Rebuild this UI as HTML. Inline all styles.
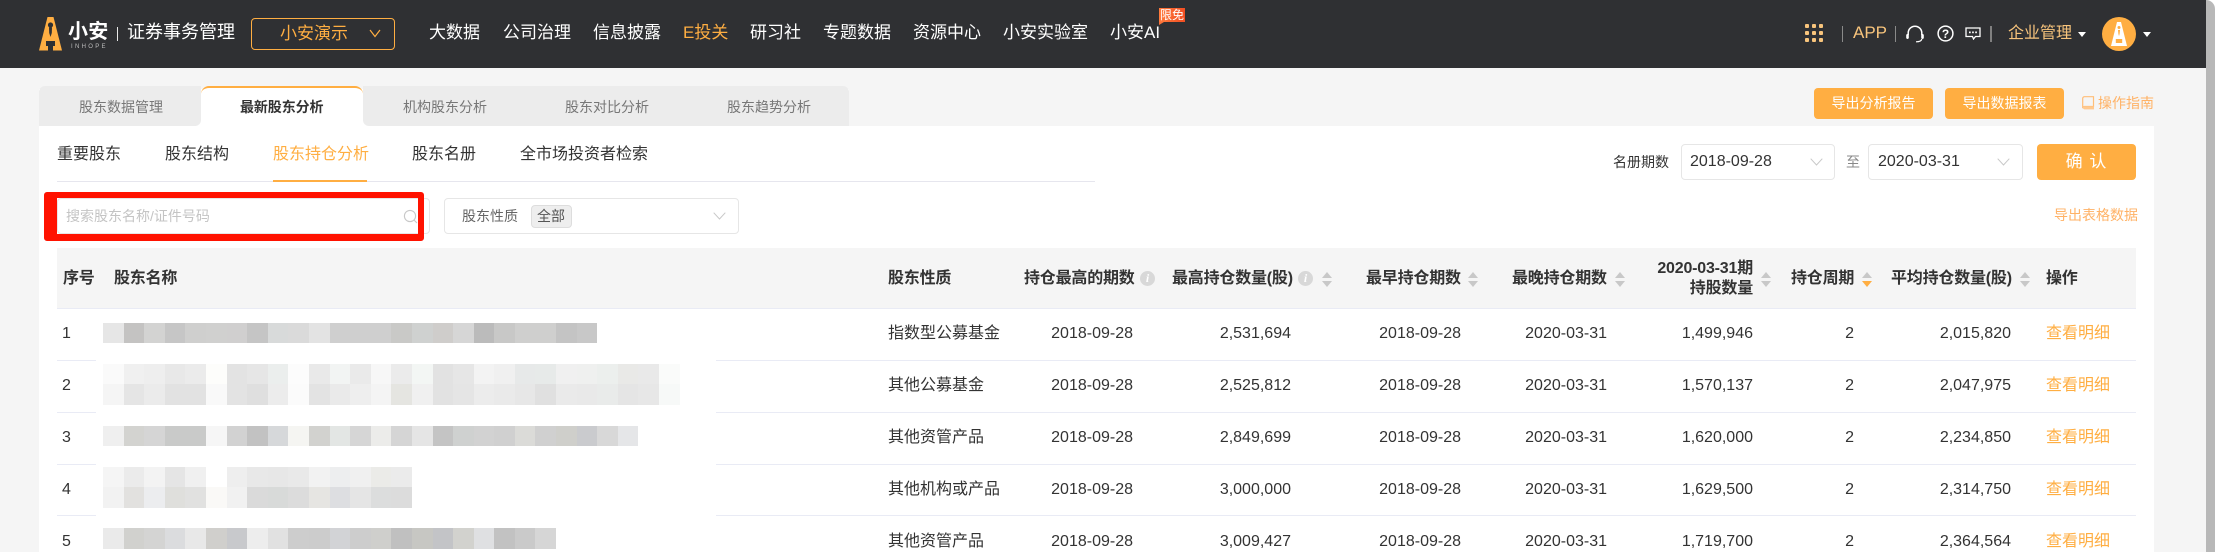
<!DOCTYPE html>
<html lang="zh-CN">
<head>
<meta charset="utf-8">
<title>最新股东分析</title>
<style>
html,body{margin:0;padding:0;width:2220px;height:552px;overflow:hidden;background:#fff}
body{font-family:"Liberation Sans","Noto Sans CJK SC",sans-serif;position:relative;color:#333}
.a{position:absolute;display:block}
.t{position:absolute;white-space:nowrap;line-height:20px;height:20px}
.nav{font-size:17px;color:#fff;top:23px}
.tab{font-size:14px;color:#777;top:97px}
.sub{font-size:16px;color:#333;top:145px}
.h{font-size:16px;font-weight:700;color:#333;top:269px;letter-spacing:-.2px}
.c{font-size:16px;color:#333}
.r{text-align:right}
.o{color:#ffae42}
.line{position:absolute;left:57px;width:2079px;height:1px;background:#e9ebf5}
.m{position:absolute;left:103px;display:flex}
.m i{display:block;width:20.6px;height:100%;flex:none}
.si{position:absolute;width:0;height:0;border-left:5px solid transparent;border-right:5px solid transparent}
.up{border-bottom:6px solid #c8c8c8}
.dn{border-top:6px solid #c8c8c8}
.info{position:absolute;width:15px;height:15px;border-radius:50%;background:#d8d8d8;color:#fff;font:italic 700 12px/15px "Liberation Serif",serif;text-align:center}
.box{position:absolute;box-sizing:border-box;background:#fff;border:1px solid #e6e6e6;border-radius:4px}
</style>
</head>
<body>
<!-- page background -->
<div class="a" style="left:0;top:0;width:2206px;height:552px;background:#f5f5f5"></div>
<!-- scrollbar -->
<div class="a" style="left:2206px;top:0;width:9px;height:552px;background:#b8b8b8;border-top-right-radius:9px"></div>

<!-- header -->
<div class="a" style="left:0;top:0;width:2206px;height:68px;background:#2f3033"></div>
<svg class="a" style="left:37px;top:15px" width="28" height="37" viewBox="37 15 28 37">
<path d="M47.5 17H53.5L62 50.5H39Z" fill="#ffae42"/>
<circle cx="50.5" cy="25" r="2.6" fill="#2f3033"/>
<path d="M49 27.5H52L51.8 33L50.5 37L49.2 33Z" fill="#2f3033"/>
<path d="M46 41H55V46H53V50.5H48V46H46Z" fill="#2f3033"/>
</svg>
<div class="t" style="left:68px;top:22px;font-size:20px;font-weight:700;color:#fff;letter-spacing:.2px">小安</div>
<div class="t" style="left:71px;top:43px;height:8px;line-height:8px;font-size:6px;color:#bdbdbd;letter-spacing:2.3px">INHOPE</div>
<div class="a" style="left:117px;top:27px;width:1px;height:14px;background:#e8e8e8"></div>
<div class="t" style="left:127px;top:22px;font-size:18px;color:#fff">证券事务管理</div>
<div class="a" style="left:251px;top:18px;width:144px;height:32px;box-sizing:border-box;border:1px solid #ffae42;border-radius:4px"></div>
<div class="t o" style="left:280px;top:24px;font-size:17px">小安演示</div>
<svg class="a" style="left:369px;top:29px" width="12" height="9" viewBox="0 0 12 9"><path d="M1 1L6 7.5L11 1" fill="none" stroke="#ffae42" stroke-width="1.2"/></svg>

<div class="t nav" style="left:429px">大数据</div>
<div class="t nav" style="left:503px">公司治理</div>
<div class="t nav" style="left:593px">信息披露</div>
<div class="t nav o" style="left:683px">E投关</div>
<div class="t nav" style="left:750px">研习社</div>
<div class="t nav" style="left:823px">专题数据</div>
<div class="t nav" style="left:913px">资源中心</div>
<div class="t nav" style="left:1003px">小安实验室</div>
<div class="t nav" style="left:1110px">小安AI</div>
<div class="a" style="left:1159px;top:8px;width:26px;height:14px;background:linear-gradient(90deg,#ff7b3d,#f24e22)"></div>
<div class="a" style="left:1159px;top:22px;width:0;height:0;border-top:3px solid #f9713a;border-right:5px solid transparent"></div>
<div class="t" style="left:1160px;top:8px;height:14px;line-height:14px;font-size:12px;color:#fff">限免</div>

<!-- grid icon -->
<svg class="a" style="left:1805px;top:24px" width="18" height="18" viewBox="0 0 18 18" fill="#f8c47c">
<rect x="0" y="0" width="4" height="4" rx="1"/><rect x="7" y="0" width="4" height="4" rx="1"/><rect x="14" y="0" width="4" height="4" rx="1"/>
<rect x="0" y="7" width="4" height="4" rx="1"/><rect x="7" y="7" width="4" height="4" rx="1"/><rect x="14" y="7" width="4" height="4" rx="1"/>
<rect x="0" y="14" width="4" height="4" rx="1"/><rect x="7" y="14" width="4" height="4" rx="1"/><rect x="14" y="14" width="4" height="4" rx="1"/>
</svg>
<div class="a" style="left:1842px;top:26px;width:1px;height:16px;background:#8a8a8a"></div>
<div class="t" style="left:1853px;top:23px;font-size:17px;color:#f8c47c">APP</div>
<div class="a" style="left:1895px;top:26px;width:1px;height:16px;background:#8a8a8a"></div>
<svg class="a" style="left:1905px;top:25px" width="20" height="18" viewBox="0 0 20 18">
<path d="M3.2 10V8A6.8 6.8 0 0 1 16.8 8V10" fill="none" stroke="#fff" stroke-width="1.5"/>
<rect x="1.2" y="9" width="2.6" height="5" rx="1.2" fill="#fff"/>
<rect x="16.2" y="9" width="2.6" height="5" rx="1.2" fill="#fff"/>
<path d="M16.8 14C16.5 16 14.5 16.8 11 16.8" fill="none" stroke="#fff" stroke-width="1.2"/>
</svg>
<svg class="a" style="left:1937px;top:25px" width="17" height="17" viewBox="0 0 17 17">
<circle cx="8.5" cy="8.5" r="7.4" fill="none" stroke="#fff" stroke-width="1.5"/>
<text x="8.5" y="13" text-anchor="middle" font-family="Liberation Sans" font-weight="700" font-size="12" fill="#fff">?</text>
</svg>
<svg class="a" style="left:1965px;top:27px" width="16" height="13" viewBox="0 0 16 13">
<path d="M1 1H15V9.5H10.5L8.5 12L7.5 9.5H1Z" fill="none" stroke="#fff" stroke-width="1.3"/>
<rect x="4" y="4.5" width="1.7" height="1.7" fill="#fff"/><rect x="7.1" y="4.5" width="1.7" height="1.7" fill="#fff"/><rect x="10.2" y="4.5" width="1.7" height="1.7" fill="#fff"/>
</svg>
<div class="a" style="left:1990px;top:26px;width:2px;height:16px;background:#808080"></div>
<div class="t" style="left:2008px;top:24px;font-size:16px;color:#f8c47c">企业管理</div>
<div class="a" style="left:2078px;top:32px;width:0;height:0;border-left:4.5px solid transparent;border-right:4.5px solid transparent;border-top:5px solid #fff"></div>
<svg class="a" style="left:2102px;top:17px" width="34" height="34" viewBox="0 0 34 34">
<circle cx="17" cy="17" r="17" fill="#ffae42"/>
<path d="M15 5H19L25 29H9Z" fill="#fff"/>
<circle cx="17" cy="10.5" r="1.5" fill="#ffae42"/>
<path d="M16 13H18L17.6 17L17 19L16.4 17Z" fill="#ffae42"/>
<rect x="13.8" y="22" width="6.4" height="4" fill="#ffae42"/>
</svg>
<div class="a" style="left:2143px;top:32px;width:0;height:0;border-left:4.5px solid transparent;border-right:4.5px solid transparent;border-top:5px solid #fff"></div>

<!-- top tabs -->
<div class="a" style="left:39px;top:126px;width:2115px;height:426px;background:#fff"></div>
<div class="a" style="left:39px;top:89px;width:810px;height:37px;background:#fff"></div>
<div class="a" style="left:39px;top:86px;width:162px;height:40px;background:#ececec;border-radius:6px 0 6px 0"></div>
<div class="a" style="left:363px;top:86px;width:486px;height:40px;background:#ececec;border-radius:0 6px 0 6px"></div>
<div class="a" style="left:201px;top:86px;width:162px;height:40px;box-sizing:border-box;background:#fff;border-top:2px solid #ffae42;border-radius:8px 8px 0 0"></div>
<div class="a" style="left:849px;top:89px;width:1357px;height:37px;background:#f5f5f5"></div>
<div class="t tab" style="left:79px">股东数据管理</div>
<div class="t tab" style="left:240px;color:#333;font-weight:700;letter-spacing:-.1px">最新股东分析</div>
<div class="t tab" style="left:403px">机构股东分析</div>
<div class="t tab" style="left:565px">股东对比分析</div>
<div class="t tab" style="left:727px">股东趋势分析</div>
<div class="a" style="left:2148px;top:126px;width:6px;height:6px;background:#fff;border-top-right-radius:6px"></div>

<!-- top right buttons -->
<div class="a" style="left:1814px;top:88px;width:119px;height:31px;background:#ffae42;border-radius:4px"></div>
<div class="t" style="left:1814px;top:93px;width:119px;text-align:center;font-size:14px;color:#fff">导出分析报告</div>
<div class="a" style="left:1945px;top:88px;width:119px;height:31px;background:#ffae42;border-radius:4px"></div>
<div class="t" style="left:1945px;top:93px;width:119px;text-align:center;font-size:14px;color:#fff">导出数据报表</div>
<svg class="a" style="left:2082px;top:96px" width="13" height="14" viewBox="0 0 13 14">
<path d="M2.5 .7H11.5V10.5H2.5A1.8 1.8 0 0 0 .7 12.2V2.5A1.8 1.8 0 0 1 2.5 .7Z" fill="none" stroke="#ffbe78" stroke-width="1.2"/>
<path d="M1 10.5H12V13.4H2.5A1.6 1.6 0 0 1 1 12Z" fill="#ffc98f"/>
</svg>
<div class="t" style="left:2098px;top:93px;font-size:14px;color:#ffb266">操作指南</div>

<!-- sub tabs -->
<div class="t sub" style="left:57px">重要股东</div>
<div class="t sub" style="left:165px">股东结构</div>
<div class="t sub o" style="left:273px">股东持仓分析</div>
<div class="t sub" style="left:412px">股东名册</div>
<div class="t sub" style="left:520px">全市场投资者检索</div>
<div class="a" style="left:57px;top:181px;width:1038px;height:1px;background:#e6e6ee"></div>
<div class="a" style="left:273px;top:180px;width:94px;height:2px;background:#ffae42"></div>

<!-- date filter -->
<div class="t" style="left:1613px;top:152px;font-size:14px;color:#333">名册期数</div>
<div class="box" style="left:1681px;top:144px;width:154px;height:36px"></div>
<div class="t c" style="left:1690px;top:152px">2018-09-28</div>
<svg class="a" style="left:1810px;top:158px" width="13" height="8" viewBox="0 0 13 8"><path d="M.7 .7L6.5 7L12.3 .7" fill="none" stroke="#c8c8c8" stroke-width="1"/></svg>
<div class="t" style="left:1846px;top:152px;font-size:14px;color:#888">至</div>
<div class="box" style="left:1868px;top:144px;width:155px;height:36px"></div>
<div class="t c" style="left:1878px;top:152px">2020-03-31</div>
<svg class="a" style="left:1997px;top:158px" width="13" height="8" viewBox="0 0 13 8"><path d="M.7 .7L6.5 7L12.3 .7" fill="none" stroke="#c8c8c8" stroke-width="1"/></svg>
<div class="a" style="left:2037px;top:144px;width:99px;height:36px;background:#ffae42;border-radius:4px"></div>
<div class="t" style="left:2037px;top:152px;width:99px;text-align:center;font-size:17px;color:#fff;letter-spacing:1px">确 认</div>

<!-- search with red highlight -->
<div class="box" style="left:57px;top:198px;width:373px;height:36px"></div>
<div class="t" style="left:66px;top:206px;font-size:14px;color:#c4c4c4">搜索股东名称/证件号码</div>
<svg class="a" style="left:403px;top:209px" width="15" height="15" viewBox="0 0 15 15"><circle cx="7" cy="7" r="5.6" fill="none" stroke="#c8c8c8" stroke-width="1.1"/><path d="M11 11L14 14" stroke="#c8c8c8" stroke-width="1.1"/></svg>
<div class="a" style="left:44px;top:192px;width:380px;height:49px;box-sizing:border-box;border:solid #ff1200;border-width:6px 6px 7px 13px;border-radius:3px"></div>

<!-- nature select -->
<div class="box" style="left:444px;top:198px;width:295px;height:36px"></div>
<div class="t" style="left:462px;top:206px;font-size:14px;color:#666">股东性质</div>
<div class="box" style="left:531px;top:205px;width:41px;height:23px;background:#eee;border-color:#ddd"></div>
<div class="t" style="left:537px;top:206px;font-size:14px;color:#555">全部</div>
<svg class="a" style="left:713px;top:212px" width="13" height="8" viewBox="0 0 13 8"><path d="M.7 .7L6.5 7L12.3 .7" fill="none" stroke="#c8c8c8" stroke-width="1"/></svg>
<div class="t" style="left:2054px;top:205px;font-size:14px;color:#ffb266">导出表格数据</div>

<!-- table header -->
<div class="a" style="left:57px;top:248px;width:2079px;height:60px;background:#f5f5f5"></div>
<div class="line" style="top:308px"></div>
<div class="line" style="top:360px"></div>
<div class="line" style="top:412px"></div>
<div class="line" style="top:464px"></div>
<div class="line" style="top:515px"></div>

<div class="t h" style="left:63px">序号</div>
<div class="t h" style="left:114px">股东名称</div>
<div class="t h" style="left:888px">股东性质</div>
<div class="t h" style="left:1024px">持仓最高的期数</div>
<div class="info" style="left:1140px;top:271px">i</div>
<div class="t h" style="left:1172px">最高持仓数量(股)</div>
<div class="info" style="left:1298px;top:271px">i</div>
<div class="si up" style="left:1322px;top:272px"></div><div class="si dn" style="left:1322px;top:281px"></div>
<div class="t h" style="left:1366px">最早持仓期数</div>
<div class="si up" style="left:1468px;top:272px"></div><div class="si dn" style="left:1468px;top:281px"></div>
<div class="t h" style="left:1512px">最晚持仓期数</div>
<div class="si up" style="left:1615px;top:272px"></div><div class="si dn" style="left:1615px;top:281px"></div>
<div class="t h r" style="left:1600px;width:153px;top:259px">2020-03-31期</div>
<div class="t h r" style="left:1600px;width:153px;top:279px">持股数量</div>
<div class="si up" style="left:1761px;top:272px"></div><div class="si dn" style="left:1761px;top:281px"></div>
<div class="t h" style="left:1791px">持仓周期</div>
<div class="si up" style="left:1862px;top:272px"></div><div class="si dn" style="left:1862px;top:281px;border-top-color:#ffae42"></div>
<div class="t h" style="left:1891px">平均持仓数量(股)</div>
<div class="si up" style="left:2020px;top:272px"></div><div class="si dn" style="left:2020px;top:281px"></div>
<div class="t h" style="left:2046px">操作</div>

<!-- white cover over the name column (hides row lines) -->
<div class="a" style="left:96px;top:314px;width:620px;height:238px;background:#fff"></div>

<!-- blurred names -->
<div class="m" style="top:323px;height:20px"><i style="background:#e6e6e6"></i><i style="background:#c4c3c2"></i><i style="background:#d3d3d2"></i><i style="background:#c6c6c6"></i><i style="background:#cfcfce"></i><i style="background:#d0d0cf"></i><i style="background:#d0cfcf"></i><i style="background:#c5c5c5"></i><i style="background:#d8dada"></i><i style="background:#dadada"></i><i style="background:#e3e3e3"></i><i style="background:#cfcfcf"></i><i style="background:#cfcfcf"></i><i style="background:#cfcfcf"></i><i style="background:#c9c9c7"></i><i style="background:#cfd1d0"></i><i style="background:#cfcdcb"></i><i style="background:#d6d6d6"></i><i style="background:#bbbbbb"></i><i style="background:#c8c8c7"></i><i style="background:#cfcfce"></i><i style="background:#cfcfce"></i><i style="background:#c4c4c4"></i><i style="background:#c8c8c8"></i></div>

<div class="m" style="top:364px;height:20px"><i style="background:#fafafa"></i><i style="background:#f0f0f0"></i><i style="background:#eeeeee"></i><i style="background:#e8e8e8"></i><i style="background:#ebebeb"></i><i style="background:#fdfdfb"></i><i style="background:#e3e3e3"></i><i style="background:#e6e6e6"></i><i style="background:#ebeeed"></i><i style="background:#fcfcfc"></i><i style="background:#e9e9e9"></i><i style="background:#f2f4f3"></i><i style="background:#eaeaea"></i><i style="background:#f7f7f7"></i><i style="background:#ebebeb"></i><i style="background:#f3f6f4"></i><i style="background:#e2e2e2"></i><i style="background:#e6e6e6"></i><i style="background:#f3f3f3"></i><i style="background:#f0f0f0"></i><i style="background:#e7e9e9"></i><i style="background:#e7eae9"></i><i style="background:#f0f0f0"></i><i style="background:#eff0ef"></i><i style="background:#ecefed"></i><i style="background:#e9e9e7"></i><i style="background:#e9e9e9"></i><i style="background:#fafbfa"></i></div>
<div class="m" style="top:384px;height:21px"><i style="background:#f5f5f5"></i><i style="background:#e5e5e5"></i><i style="background:#ebebeb"></i><i style="background:#e2e2e2"></i><i style="background:#e2e2e2"></i><i style="background:#f9f9f9"></i><i style="background:#e3e3e3"></i><i style="background:#dfdfdf"></i><i style="background:#ececec"></i><i style="background:#fbfbfb"></i><i style="background:#e3e3e3"></i><i style="background:#eaeaea"></i><i style="background:#eeeeee"></i><i style="background:#f4f4f4"></i><i style="background:#e5e5e1"></i><i style="background:#f0f0f0"></i><i style="background:#e2e2e2"></i><i style="background:#e5e5e5"></i><i style="background:#ececec"></i><i style="background:#eaeaea"></i><i style="background:#e7e7e7"></i><i style="background:#e0e0e0"></i><i style="background:#eaeaea"></i><i style="background:#e9e9e9"></i><i style="background:#e9ebea"></i><i style="background:#e5e5e5"></i><i style="background:#e7e7e7"></i><i style="background:#f7f9f8"></i></div>

<div class="m" style="top:426px;height:20px"><i style="background:#efefef"></i><i style="background:#d3d3d0"></i><i style="background:#d5d5d5"></i><i style="background:#c9cac9"></i><i style="background:#c9cac9"></i><i style="background:#f6f6f6"></i><i style="background:#d2d2d2"></i><i style="background:#c2c2c2"></i><i style="background:#d6d8da"></i><i style="background:#f5f5f2"></i><i style="background:#d2d2cf"></i><i style="background:#e3e6e4"></i><i style="background:#d6d6d6"></i><i style="background:#ececea"></i><i style="background:#d5d5d5"></i><i style="background:#e5e5e5"></i><i style="background:#c4c4c4"></i><i style="background:#cfd1d0"></i><i style="background:#d2d2d2"></i><i style="background:#d0d0d0"></i><i style="background:#dbdbd8"></i><i style="background:#d0d0d0"></i><i style="background:#cfcfcb"></i><i style="background:#cacbce"></i><i style="background:#d8d8d8"></i><i style="background:#e5e6e8"></i></div>

<div class="m" style="top:467px;height:20px"><i style="background:#f5f5f5"></i><i style="background:#ebebeb"></i><i style="background:#f3f3f3"></i><i style="background:#e5e5e5"></i><i style="background:#f0f0f0"></i><i style="background:#ffffff"></i><i style="background:#eeeeee"></i><i style="background:#e8e8e8"></i><i style="background:#e7e7e7"></i><i style="background:#e9e9e9"></i><i style="background:#f2f2f2"></i><i style="background:#edeeef"></i><i style="background:#f0f0f0"></i><i style="background:#ebebe8"></i><i style="background:#ebebeb"></i></div>
<div class="m" style="top:487px;height:21px"><i style="background:#f2f2f2"></i><i style="background:#e2e1df"></i><i style="background:#ecedef"></i><i style="background:#dfdfdc"></i><i style="background:#e1e1e0"></i><i style="background:#faf9f7"></i><i style="background:#f1f1f1"></i><i style="background:#dadada"></i><i style="background:#d8dad9"></i><i style="background:#dcdcdc"></i><i style="background:#e6e5e2"></i><i style="background:#dddee1"></i><i style="background:#e5e5e5"></i><i style="background:#dcdddd"></i><i style="background:#dcdcdc"></i></div>

<div class="m" style="top:528px;height:21px"><i style="background:#eaeaea"></i><i style="background:#d1d1ce"></i><i style="background:#d4d4d3"></i><i style="background:#dbdcde"></i><i style="background:#e8e8e8"></i><i style="background:#d0cfcc"></i><i style="background:#c8c9cc"></i><i style="background:#ededed"></i><i style="background:#e1e1e1"></i><i style="background:#cdcdcd"></i><i style="background:#cccccc"></i><i style="background:#d2d3d6"></i><i style="background:#cdcdcd"></i><i style="background:#cfcfcc"></i><i style="background:#c0c0c0"></i><i style="background:#c7c7c3"></i><i style="background:#c3c4c7"></i><i style="background:#d2d2ce"></i><i style="background:#dfe0e2"></i><i style="background:#c2c2c2"></i><i style="background:#cacaca"></i><i style="background:#d6d6d6"></i></div>

<!-- row 1 -->
<div class="t c" style="left:62px;top:324px">1</div>
<div class="t c" style="left:888px;top:324px">指数型公募基金</div>
<div class="t c r" style="left:1033px;width:100px;top:324px">2018-09-28</div>
<div class="t c r" style="left:1190px;width:101px;top:324px">2,531,694</div>
<div class="t c r" style="left:1361px;width:100px;top:324px">2018-09-28</div>
<div class="t c r" style="left:1507px;width:100px;top:324px">2020-03-31</div>
<div class="t c r" style="left:1653px;width:100px;top:324px">1,499,946</div>
<div class="t c r" style="left:1804px;width:50px;top:324px">2</div>
<div class="t c r" style="left:1911px;width:100px;top:324px">2,015,820</div>
<div class="t c o" style="left:2046px;top:324px">查看明细</div>
<!-- row 2 -->
<div class="t c" style="left:62px;top:376px">2</div>
<div class="t c" style="left:888px;top:376px">其他公募基金</div>
<div class="t c r" style="left:1033px;width:100px;top:376px">2018-09-28</div>
<div class="t c r" style="left:1190px;width:101px;top:376px">2,525,812</div>
<div class="t c r" style="left:1361px;width:100px;top:376px">2018-09-28</div>
<div class="t c r" style="left:1507px;width:100px;top:376px">2020-03-31</div>
<div class="t c r" style="left:1653px;width:100px;top:376px">1,570,137</div>
<div class="t c r" style="left:1804px;width:50px;top:376px">2</div>
<div class="t c r" style="left:1911px;width:100px;top:376px">2,047,975</div>
<div class="t c o" style="left:2046px;top:376px">查看明细</div>
<!-- row 3 -->
<div class="t c" style="left:62px;top:428px">3</div>
<div class="t c" style="left:888px;top:428px">其他资管产品</div>
<div class="t c r" style="left:1033px;width:100px;top:428px">2018-09-28</div>
<div class="t c r" style="left:1190px;width:101px;top:428px">2,849,699</div>
<div class="t c r" style="left:1361px;width:100px;top:428px">2018-09-28</div>
<div class="t c r" style="left:1507px;width:100px;top:428px">2020-03-31</div>
<div class="t c r" style="left:1653px;width:100px;top:428px">1,620,000</div>
<div class="t c r" style="left:1804px;width:50px;top:428px">2</div>
<div class="t c r" style="left:1911px;width:100px;top:428px">2,234,850</div>
<div class="t c o" style="left:2046px;top:428px">查看明细</div>
<!-- row 4 -->
<div class="t c" style="left:62px;top:480px">4</div>
<div class="t c" style="left:888px;top:480px">其他机构或产品</div>
<div class="t c r" style="left:1033px;width:100px;top:480px">2018-09-28</div>
<div class="t c r" style="left:1190px;width:101px;top:480px">3,000,000</div>
<div class="t c r" style="left:1361px;width:100px;top:480px">2018-09-28</div>
<div class="t c r" style="left:1507px;width:100px;top:480px">2020-03-31</div>
<div class="t c r" style="left:1653px;width:100px;top:480px">1,629,500</div>
<div class="t c r" style="left:1804px;width:50px;top:480px">2</div>
<div class="t c r" style="left:1911px;width:100px;top:480px">2,314,750</div>
<div class="t c o" style="left:2046px;top:480px">查看明细</div>
<!-- row 5 -->
<div class="t c" style="left:62px;top:532px">5</div>
<div class="t c" style="left:888px;top:532px">其他资管产品</div>
<div class="t c r" style="left:1033px;width:100px;top:532px">2018-09-28</div>
<div class="t c r" style="left:1190px;width:101px;top:532px">3,009,427</div>
<div class="t c r" style="left:1361px;width:100px;top:532px">2018-09-28</div>
<div class="t c r" style="left:1507px;width:100px;top:532px">2020-03-31</div>
<div class="t c r" style="left:1653px;width:100px;top:532px">1,719,700</div>
<div class="t c r" style="left:1804px;width:50px;top:532px">2</div>
<div class="t c r" style="left:1911px;width:100px;top:532px">2,364,564</div>
<div class="t c o" style="left:2046px;top:532px">查看明细</div>

<!-- right gutter -->
<div class="a" style="left:2154px;top:69px;width:52px;height:483px;background:#f5f5f5"></div>
</body>
</html>
